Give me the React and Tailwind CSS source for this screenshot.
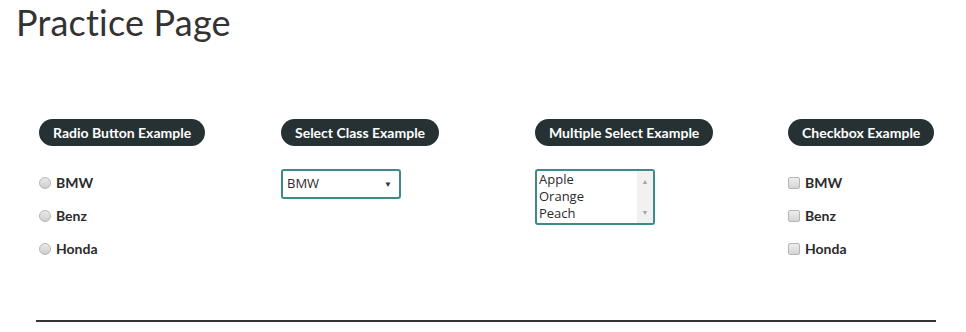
import React from "react";

const Legend = ({ children }) => (
  <span className="inline-block rounded-full bg-[#263133] px-[14px] h-[27px] leading-[27px] text-[14px] font-bold text-white">
    {children}
  </span>
);

const cars = ["BMW", "Benz", "Honda"];

export default function App() {
  return (
    <div className="bg-white w-[966px] h-[332px] text-[#2b2b2b] font-['Lato','Open_Sans',sans-serif]">
      <h1 className="pl-[16px] pt-[1px] text-[36px] leading-[42px] text-[#333] font-normal tracking-[0.2px]">
        Practice Page
      </h1>

      <div className="mt-[76px] pl-[39px] grid grid-cols-[242px_254px_253px_1fr]">
        {/* Radio */}
        <div>
          <Legend>Radio Button Example</Legend>
          <div className="mt-[30px] flex flex-col gap-[20px]">
            {cars.map((c) => (
              <label key={c} className="flex items-center h-[13px] text-[14px] font-bold">
                <span className="w-[12px] h-[12px] rounded-full border border-[#b5b5b5] bg-gradient-to-b from-[#e9e9e9] to-[#cfcfcf] mr-[5px]" />
                {c}
              </label>
            ))}
          </div>
        </div>

        {/* Select */}
        <div>
          <Legend>Select Class Example</Legend>
          <div className="mt-[23px] w-[120px] h-[30px] border-2 border-[#3c8b88] rounded-[3px] flex items-center justify-between pl-[4px] pr-[7px] text-[13px] font-['Open_Sans',sans-serif]">
            <span>BMW</span>
            <span className="text-[8px] text-[#333]">▼</span>
          </div>
        </div>

        {/* Multiple select */}
        <div>
          <Legend>Multiple Select Example</Legend>
          <div className="mt-[23px] w-[120px] h-[56px] border-2 border-[#3c8b88] rounded-[3px] flex text-[13px] leading-[17px] font-['Open_Sans',sans-serif]">
            <div className="flex-1 pl-[2px]">
              <div>Apple</div>
              <div>Orange</div>
              <div>Peach</div>
            </div>
            <div className="w-[16px] bg-[#f1f1f1] flex flex-col justify-between items-center text-[7px] text-[#a3a3a3] py-[2px]">
              <span>▲</span>
              <span>▼</span>
            </div>
          </div>
        </div>

        {/* Checkbox */}
        <div>
          <Legend>Checkbox Example</Legend>
          <div className="mt-[30px] flex flex-col gap-[20px]">
            {cars.map((c) => (
              <label key={c} className="flex items-center h-[13px] text-[14px] font-bold">
                <span className="w-[12px] h-[12px] rounded-[2px] border border-[#b5b5b5] bg-gradient-to-b from-[#eeeeee] to-[#d4d4d4] mr-[5px]" />
                {c}
              </label>
            ))}
          </div>
        </div>
      </div>

      <div className="mt-[65px] ml-[36px] w-[900px] h-[2px] bg-[#333]" />
    </div>
  );
}
